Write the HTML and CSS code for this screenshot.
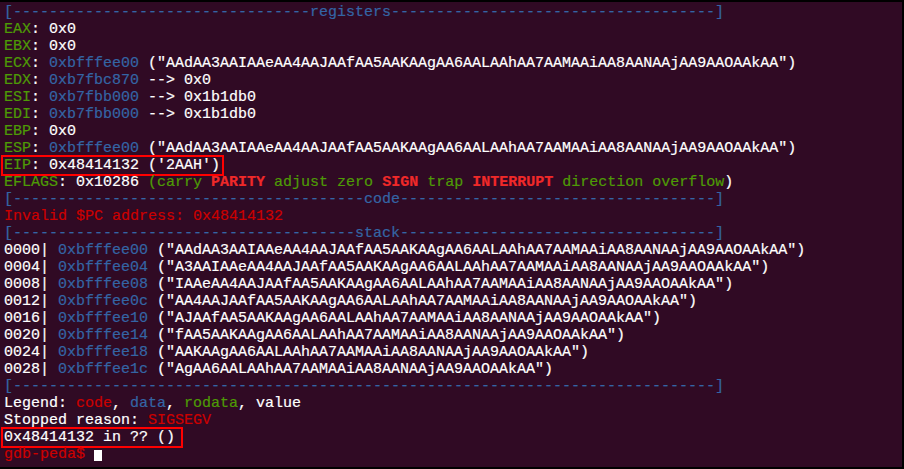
FILE: index.html
```html
<!DOCTYPE html>
<html>
<head>
<meta charset="utf-8">
<link rel="stylesheet" href="styles.css">
</head>
<body>
<div class="term">
<div class="line b">[---------------------------------registers------------------------------------]</div>
<div class="line"><span class="g">EAX</span>: 0x0</div>
<div class="line"><span class="g">EBX</span>: 0x0</div>
<div class="line"><span class="g">ECX</span>: <span class="b">0xbfffee00</span> ("AAdAA3AAIAAeAA4AAJAAfAA5AAKAAgAA6AALAAhAA7AAMAAiAA8AANAAjAA9AAOAAkAA")</div>
<div class="line"><span class="g">EDX</span>: <span class="b">0xb7fbc870</span> --&gt; 0x0</div>
<div class="line"><span class="g">ESI</span>: <span class="b">0xb7fbb000</span> --&gt; 0x1b1db0</div>
<div class="line"><span class="g">EDI</span>: <span class="b">0xb7fbb000</span> --&gt; 0x1b1db0</div>
<div class="line"><span class="g">EBP</span>: 0x0</div>
<div class="line"><span class="g">ESP</span>: <span class="b">0xbfffee00</span> ("AAdAA3AAIAAeAA4AAJAAfAA5AAKAAgAA6AALAAhAA7AAMAAiAA8AANAAjAA9AAOAAkAA")</div>
<div class="line"><span class="box box-eip"><span class="g">EIP</span>: 0x48414132 ('2AAH')</span></div>
<div class="line"><span class="g">EFLAGS</span>: 0x10286 <span class="g">(carry</span> <span class="rb">PARITY</span> <span class="g">adjust zero</span> <span class="rb">SIGN</span> <span class="g">trap</span> <span class="rb">INTERRUPT</span> <span class="g">direction overflow</span>)</div>
<div class="line b">[---------------------------------------code-----------------------------------]</div>
<div class="line r">Invalid $PC address: 0x48414132</div>
<div class="line b">[--------------------------------------stack-----------------------------------]</div>
<div class="line">0000| <span class="b">0xbfffee00</span> ("AAdAA3AAIAAeAA4AAJAAfAA5AAKAAgAA6AALAAhAA7AAMAAiAA8AANAAjAA9AAOAAkAA")</div>
<div class="line">0004| <span class="b">0xbfffee04</span> ("A3AAIAAeAA4AAJAAfAA5AAKAAgAA6AALAAhAA7AAMAAiAA8AANAAjAA9AAOAAkAA")</div>
<div class="line">0008| <span class="b">0xbfffee08</span> ("IAAeAA4AAJAAfAA5AAKAAgAA6AALAAhAA7AAMAAiAA8AANAAjAA9AAOAAkAA")</div>
<div class="line">0012| <span class="b">0xbfffee0c</span> ("AA4AAJAAfAA5AAKAAgAA6AALAAhAA7AAMAAiAA8AANAAjAA9AAOAAkAA")</div>
<div class="line">0016| <span class="b">0xbfffee10</span> ("AJAAfAA5AAKAAgAA6AALAAhAA7AAMAAiAA8AANAAjAA9AAOAAkAA")</div>
<div class="line">0020| <span class="b">0xbfffee14</span> ("fAA5AAKAAgAA6AALAAhAA7AAMAAiAA8AANAAjAA9AAOAAkAA")</div>
<div class="line">0024| <span class="b">0xbfffee18</span> ("AAKAAgAA6AALAAhAA7AAMAAiAA8AANAAjAA9AAOAAkAA")</div>
<div class="line">0028| <span class="b">0xbfffee1c</span> ("AgAA6AALAAhAA7AAMAAiAA8AANAAjAA9AAOAAkAA")</div>
<div class="line b">[------------------------------------------------------------------------------]</div>
<div class="line">Legend: <span class="r">code</span>, <span class="b">data</span>, <span class="g">rodata</span>, value</div>
<div class="line">Stopped reason: <span class="r">SIGSEGV</span></div>
<div class="line"><span class="box box-pc">0x48414132 in ?? ()</span></div>
<div class="line"><span class="r">gdb-peda$ </span><span class="cursor"></span></div>
</div>
</body>
</html>
```

FILE: styles.css
```css
html, body {
  margin: 0;
  padding: 0;
  background: #000;
}

body {
  width: 904px;
  height: 469px;
  overflow: hidden;
}

.term {
  margin-top: 2px;
  width: 902px;
  height: 465px;
  box-sizing: border-box;
  padding: 2px 0 0 4px;
  background: #300a24;
  color: #ffffff;
  font-family: "Liberation Mono", monospace;
  font-size: 15px;
  line-height: 17px;
  -webkit-text-stroke: 0.2px currentColor;
}

.line {
  height: 17px;
  white-space: pre;
}

.g { color: #4e9a06; }
.b { color: #3465a4; }
.r { color: #cc0000; }
.rb { color: #ef2929; font-weight: bold; }

.box {
  display: inline-block;
  height: 17px;
  margin-left: -1px;
  padding-left: 1px;
  outline: 2px solid #ff0000;
}

.box-eip { padding-right: 2px; }

.box-pc { padding-right: 6px; }

.cursor {
  display: inline-block;
  width: 8px;
  height: 11px;
  background: #ffffff;
  vertical-align: -3px;
}
```
